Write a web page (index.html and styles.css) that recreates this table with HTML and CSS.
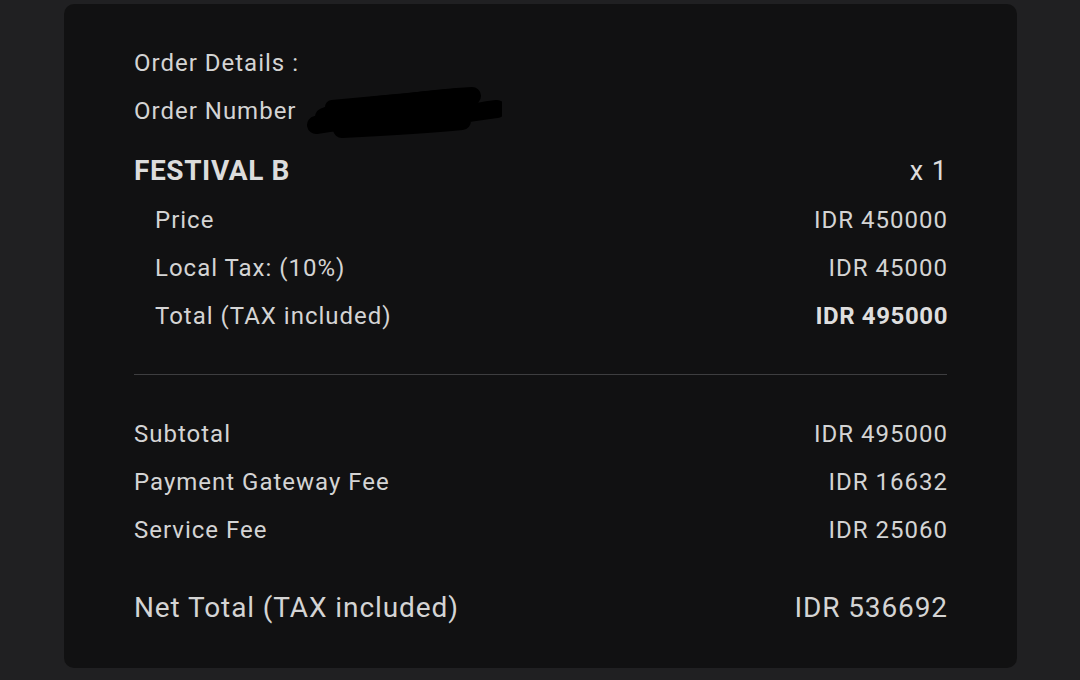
FILE: index.html
```html
<!DOCTYPE html>
<html lang="en">
<head>
<meta charset="utf-8">
<title>Order Details</title>
<link rel="stylesheet" href="styles.css">
</head>
<body>
<main class="card">
  <div class="line">Order Details :</div>
  <div class="line">
    <span class="order-num">Order Number
      <svg class="scribble" width="200" height="60" viewBox="0 0 200 60" aria-hidden="true">
        <path d="M22 38 C40 30 70 26 100 24 C130 20 150 18 170 17 M14 46 C50 40 100 38 150 36 C170 34 185 31 195 30 M40 50 C80 48 120 46 160 42" stroke="#000" stroke-width="18" stroke-linecap="round" fill="none"/>
        <path d="M30 28 L160 16" stroke="#000" stroke-width="14" stroke-linecap="round" fill="none"/>
      </svg>
    </span>
  </div>

  <div class="row product">
    <span>FESTIVAL B</span>
    <span class="val qty">x 1</span>
  </div>
  <div class="row sub">
    <span>Price</span>
    <span class="val">IDR 450000</span>
  </div>
  <div class="row sub">
    <span>Local Tax: (10%)</span>
    <span class="val">IDR 45000</span>
  </div>
  <div class="row sub">
    <span>Total (TAX included)</span>
    <span class="val strong">IDR 495000</span>
  </div>

  <hr class="divider">

  <div class="row">
    <span>Subtotal</span>
    <span class="val">IDR 495000</span>
  </div>
  <div class="row">
    <span>Payment Gateway Fee</span>
    <span class="val">IDR 16632</span>
  </div>
  <div class="row">
    <span>Service Fee</span>
    <span class="val">IDR 25060</span>
  </div>

  <div class="row net">
    <span>Net Total (TAX included)</span>
    <span class="val">IDR 536692</span>
  </div>
</main>
</body>
</html>
```

FILE: styles.css
```css
html, body {
  margin: 0;
  padding: 0;
  background: #202022;
  height: 680px;
  overflow: hidden;
}

body {
  font-family: Roboto, "Liberation Sans", sans-serif;
  color: #d4d4d4;
}

.card {
  box-sizing: border-box;
  margin: 4px 63px 0 64px;
  height: 664px;
  background: #111112;
  border-radius: 10px;
  padding: 35px 70px 0 70px;
  display: flex;
  flex-direction: column;
}

.line {
  font-size: 24px;
  letter-spacing: 1px;
  line-height: 48px;
  height: 48px;
}

.order-num {
  position: relative;
  display: inline-block;
}

.scribble {
  position: absolute;
  left: 168px;
  top: -8px;
}

.row {
  display: flex;
  justify-content: space-between;
  align-items: center;
  font-size: 24px;
  letter-spacing: 1px;
  line-height: 48px;
  height: 48px;
}

.val {
  margin-right: -1px;
}

.product {
  margin-top: 11px;
  height: 50px;
  font-size: 28px;
  font-weight: 700;
  letter-spacing: 0.6px;
  color: #dcdcdc;
}

.product .qty {
  font-weight: 400;
  font-size: 27px;
  letter-spacing: 1px;
}

.sub {
  padding-left: 21px;
}

.strong {
  font-weight: 700;
  letter-spacing: 0.6px;
  color: #dedede;
}

.divider {
  border: none;
  height: 1px;
  background: #3e3e40;
  margin: 34px 0 35px 0;
}

.net {
  margin-top: 30px;
  font-size: 28px;
  letter-spacing: 0.9px;
}
```
